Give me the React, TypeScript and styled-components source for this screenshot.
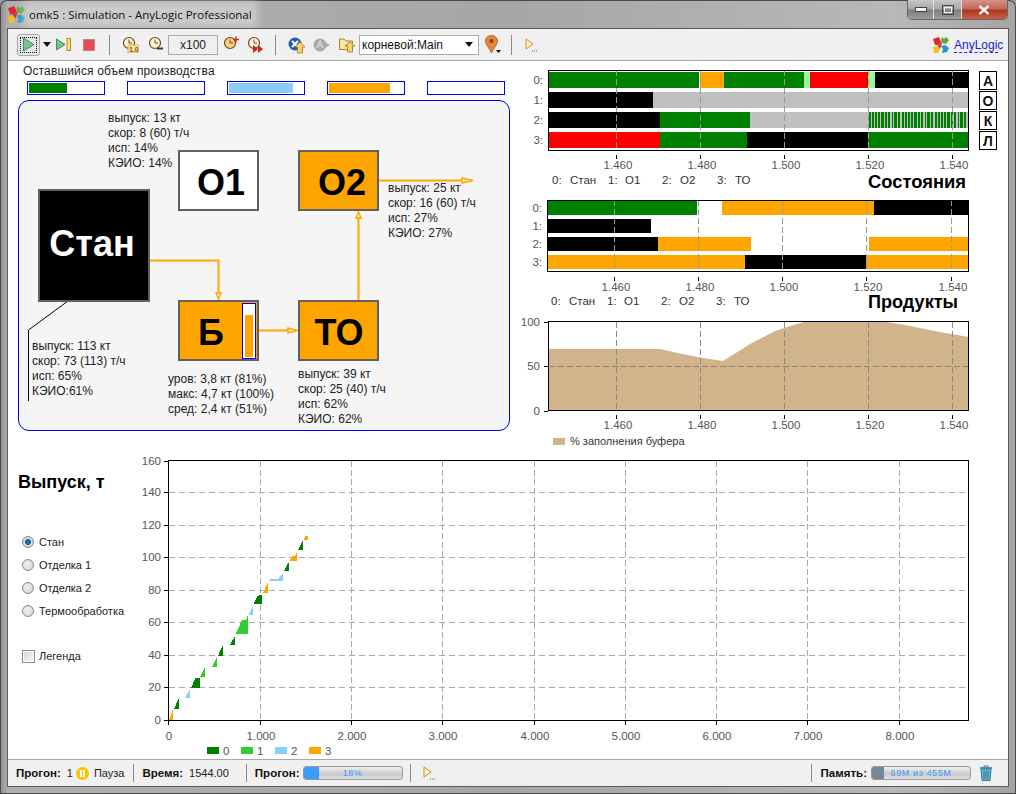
import React from "react";
import styled, { createGlobalStyle } from "styled-components";

const Global = createGlobalStyle`
  html, body { margin: 0; padding: 0; background: #9a9a9a; overflow: hidden; }
  * { box-sizing: border-box; }
`;

const FONT = `"Liberation Sans", Arial, sans-serif`;

const Win = styled.div`
  width: 1016px; height: 794px; display: flex; flex-direction: column;
  padding: 0 8px 8px; position: relative; overflow: hidden;
  font-family: ${FONT}; color: #111;
  background: linear-gradient(90deg, #8d8d8d 0, #b0b0b0 8px, #a6a6a6 50%, #b8b8b8 88%, #a4a4a4 100%);
  box-shadow: inset 0 0 0 1px #4a4a4a; border-radius: 7px 7px 0 0;
`;
const TitleBar = styled.div`height: 29px; display: flex; align-items: center; flex: none;`;
const TitleText = styled.div`
  margin-left: 4px; font-family: "Open Sans", sans-serif; font-size: 11.5px; line-height: 15px; color: #111;
  background: rgba(222,222,222,.6); box-shadow: 0 0 9px 6px rgba(222,222,222,.6);
`;
const WinButtons = styled.div`
  position: absolute; right: 8px; top: 0; width: 101px; height: 20px; display: flex;
  border: 1px solid #666; border-top: none; border-radius: 0 0 5px 5px; overflow: hidden;
`;
const WinBtn = styled.div<{ $w: number; $close?: boolean }>`
  width: ${p => p.$w}px; display: flex; align-items: center; justify-content: center;
  border-right: 1px solid #ddd;
  background: ${p => p.$close
    ? "linear-gradient(#d3938a 0, #c46a5a 45%, #b0341f 55%, #c9604c 100%)"
    : "linear-gradient(#c8c8c8 0, #a9a9a9 45%, #7e7e7e 55%, #9d9d9d 100%)"};
  &:last-child { border-right: none; }
`;

const Body = styled.div`flex: 1; display: flex; flex-direction: column; min-height: 0; background: #fff; box-shadow: 0 0 0 1px #5a5a5a;`;

const Toolbar = styled.div`
  height: 32px; flex: none; display: flex; align-items: center; padding: 0 10px 0 9px;
  background: #f0f0f0; border-bottom: 1px solid #a8a8a8;
`;
const Slot = styled.div<{ $ml: number }>`margin-left: ${p => p.$ml}px; display: flex; align-items: center; flex: none;`;
const RunBtn = styled.div`
  width: 23px; height: 22px; display: flex; align-items: center; justify-content: center; flex: none;
  border: 1px solid #aaa; border-radius: 3px; background: #e8e8e8; position: relative;
  &::after { content: ""; position: absolute; inset: 2px; border: 1px dotted #111; }
`;
const Sep = styled.div<{ $ml: number }>`margin-left: ${p => p.$ml}px; width: 1px; height: 20px; background: #8a8a8a; flex: none;`;
const Field = styled.div`
  margin-left: 3px; width: 50px; height: 20px; background: #efefef; border: 1px solid #aaa;
  display: flex; align-items: center; justify-content: center; font-size: 12px; color: #222; flex: none;
`;
const Combo = styled.div`
  margin-left: 3px; width: 120px; height: 20px; background: #fff; border: 1px solid #aaa; flex: none;
  display: flex; align-items: center; justify-content: space-between; padding: 0 5px 0 2px; font-size: 12px; color: #111;
`;
const Spacer = styled.div`flex: 1;`;
const LogoLink = styled.div`
  margin-left: 5px; color: #2222dd; font-size: 12px; width: 44px; line-height: 13px; border-bottom: 1px dashed #2222dd; margin-top: 2px; white-space: nowrap;
`;

const Content = styled.div`flex: 1; display: flex; flex-direction: column; min-height: 0; background: #fff;`;
const UpperRow = styled.div`display: flex; height: 384px; flex: none;`;
const LeftCol = styled.div`width: 512px; flex: none; padding: 4px 0 0 10px;`;
const RemainTitle = styled.div`font-size: 12px; line-height: 13px; margin-left: 5px; letter-spacing: .14px; color: #222;`;
const RemainRow = styled.div`display: flex; gap: 22px; margin: 3px 0 5px 9px;`;
const RemainBar = styled.div`width: 78px; height: 14px; border: 1px solid #0000ee; background: #fff; padding: 1px;`;
const RemainFill = styled.div<{ $c: string }>`height: 10px; background: ${p => p.$c};`;

const Diagram = styled.div`
  position: relative; width: 492px; height: 331px; border: 1px solid #0000ee; border-radius: 11px; background: #f5f5f5;
`;
const Wires = styled.svg`position: absolute; left: -1px; top: -1px; width: 492px; height: 331px; pointer-events: none;`;
const Node = styled.div<{ $x: number; $y: number; $w: number; $h: number; $bg: string; $fg: string; $shift: number; $drop: number }>`
  position: absolute; left: ${p => p.$x - 19}px; top: ${p => p.$y - 101}px; width: ${p => p.$w}px; height: ${p => p.$h}px;
  background: ${p => p.$bg}; color: ${p => p.$fg}; border: 2px solid #606060;
  display: flex; align-items: center; justify-content: center; font-weight: 700; font-size: 36px;
  padding-left: ${p => Math.max(p.$shift, 0)}px; padding-right: ${p => Math.max(-p.$shift, 0)}px;
  padding-top: ${p => Math.max(p.$drop, 0)}px; padding-bottom: ${p => Math.max(-p.$drop, 0)}px;
`;
const Gauge = styled.div`
  position: absolute; left: 223px; top: 202px; width: 14px; height: 56px; background: #fff; border: 1px solid #0000ee;
  display: flex; align-items: flex-end; padding: 1px 2px;
`;
const GaugeFill = styled.div`width: 8px; height: 42px; background: #ffa500;`;
const Info = styled.div<{ $x: number; $y: number }>`
  position: absolute; left: ${p => p.$x - 19}px; top: ${p => p.$y - 101}px; font-size: 12px; line-height: 15px; color: #222;
  white-space: nowrap;
`;

const RightCol = styled.div`width: 488px; flex: none; display: flex; flex-direction: column;`;
const ChartRow = styled.div`display: flex; flex: none;`;
const ChartSvg = styled.svg`display: block; flex: none;`;
const Letters = styled.div`display: flex; flex-direction: column; gap: 1px; margin: 10px 0 0 0; flex: none;`;
const Letter = styled.div`
  width: 18px; height: 19px; border: 1px solid #000; background: #fff; font-weight: 700; font-size: 14px;
  display: flex; align-items: center; justify-content: center;
`;

const LowerRow = styled.div`flex: 1; display: flex; min-height: 0;`;
const Side = styled.div`width: 128px; flex: none; padding: 26px 0 0 10px;`;
const BigTitle = styled.div`font-size: 18px; font-weight: 700; line-height: 22px; color: #000;`;
const Radios = styled.div`display: flex; flex-direction: column; gap: 7px; margin: 41px 0 0 4px;`;
const RadioRow = styled.div`display: flex; align-items: center; height: 16px; font-size: 11px; color: #1a1a2a; white-space: nowrap;`;
const RadioDot = styled.span<{ $on?: boolean }>`
  width: 12px; height: 12px; border-radius: 50%; margin-right: 5px; flex: none; border: 1px solid #8a8a8a;
  background: ${p => p.$on ? "radial-gradient(circle, #1f7fc0 0, #0d5a94 38%, #e4e4e4 45%, #c4c4c4 100%)" : "radial-gradient(circle at 40% 40%, #f2f2f2 0, #cfcfcf 100%)"};
`;
const CheckRow = styled(RadioRow)`margin: 29px 0 0 4px;`;
const CheckBox = styled.span`
  width: 13px; height: 13px; margin-right: 4px; flex: none; border: 1px solid #8a8a8a;
  background: linear-gradient(135deg, #d8d8d8, #f6f6f6); box-shadow: inset 0 0 0 1px #fff;
`;

const Status = styled.div`
  height: 27px; flex: none; display: flex; align-items: center; background: #f0f0f0; border-top: 1px solid #a8a8a8;
  padding: 0 8px; font-size: 11px; color: #222;
`;
const SLabel = styled.b<{ $ml: number }>`margin-left: ${p => p.$ml}px; font-size: 11.5px; color: #111; white-space: nowrap;`;
const SText = styled.span<{ $ml: number }>`margin-left: ${p => p.$ml}px; font-size: 11px; white-space: nowrap;`;
const SSep = styled.div<{ $ml: number }>`margin-left: ${p => p.$ml}px; width: 1px; height: 18px; background: #8a8a8a; flex: none;`;
const PauseDot = styled.span`
  margin-left: 3px; width: 13px; height: 13px; border-radius: 50%; background: #fdc400; flex: none; position: relative;
  &::before, &::after { content: ""; position: absolute; top: 3px; width: 2px; height: 7px; background: #fff; }
  &::before { left: 4px; } &::after { left: 7px; }
`;
const Meter = styled.div<{ $ml: number; $w: number }>`
  margin-left: ${p => p.$ml}px; width: ${p => p.$w}px; height: 14px; flex: none; position: relative; overflow: hidden;
  border: 1px solid #999; border-radius: 3px; background: linear-gradient(#efefef, #c9c9c9 60%, #e2e2e2);
  display: flex; align-items: center; justify-content: center; font-size: 9px; color: #3b9bff; letter-spacing: .6px;
`;
const MeterFill = styled.div<{ $c: string }>`position: absolute; left: 0; top: 0; bottom: 0; background: ${p => p.$c};`;

const AxisT = styled.text`font-family: ${FONT}; font-size: 11.5px; fill: #555;`;
const LegendT = styled.text`font-family: ${FONT}; font-size: 11.5px; fill: #333;`;
const ChartTitle = styled.text`font-family: ${FONT}; font-size: 18px; font-weight: 700; fill: #000;`;
const AreaLegend = styled.div`font-size: 11px; line-height: 13px; color: #333; margin: -10px 0 0 50px; height: 13px; position: relative;`;

const G = "#008000", O = "#ffa500", R = "#ff0000", K = "#000", S = "#c0c0c0", L = "#98fb98";
const LIME = "#32cd32", SKY = "#87cefa";
type B = [number, number, string];

const Stripes = () => {
  const out: React.ReactNode[] = [];
  let x = 869, i = 0;
  const seq = [2, 1, 2, 1, 2, 1, 2, 1, 3, 1, 2, 1, 2, 2, 1, 1, 3, 1, 2, 2];
  while (x < 968) {
    const w = seq[i % seq.length];
    out.push(<rect key={x} x={x} y={112} width={Math.min(w, 968 - x)} height={16} fill={i % 2 ? S : G} shapeRendering="crispEdges" />);
    x += w; i++;
  }
  return <>{out}</>;
};

const V = ({ x, y1, y2, c = "#8a8a8a" }: { x: number; y1: number; y2: number; c?: string }) => (
  <line x1={x + .5} x2={x + .5} y1={y1} y2={y2} stroke={c} strokeDasharray="6 3" shapeRendering="crispEdges" />
);
const XLabels = ({ xs, y }: { xs: number[]; y: number }) => (
  <>
    {["1.460", "1.480", "1.500", "1.520", "1.540"].map((t, i) => (
      <React.Fragment key={t}>
        <line x1={xs[i] + .5} x2={xs[i] + .5} y1={y - 14} y2={y - 10} stroke="#000" shapeRendering="crispEdges" />
        <AxisT x={xs[i] + 2} y={y} textAnchor="middle">{t}</AxisT>
      </React.Fragment>
    ))}
  </>
);
const StateLegend = ({ y, dx }: { y: number; dx: number }) => (
  <>
    {[["0:", 552], ["Стан", 570], ["1:", 608], ["О1", 625], ["2:", 662], ["О2", 680], ["3:", 717], ["ТО", 735]].map(([t, x]) => (
      <LegendT key={String(t)} x={(x as number) + dx} y={y}>{t}</LegendT>
    ))}
  </>
);

const Gantt = ({ top, height, rows, rowY, rowH, xs, frame, label, labelX, titleY, labelsY, legendY, labelRight, dx, stripes }: {
  top: number; height: number; rows: B[][]; rowY: number[]; rowH: number; xs: number[]; frame: [number, number, number, number];
  label: string; labelX: number; titleY: number; labelsY: number; legendY: number; labelRight: number; dx: number; stripes?: boolean;
}) => (
  <ChartSvg width={459} height={height} viewBox={`520 ${top} 459 ${height}`}>
    {rows.map((bars, i) => bars.map(([a, b, c]) => (
      <rect key={`${i}-${a}`} x={a} y={rowY[i]} width={b - a} height={rowH} fill={c} shapeRendering="crispEdges" />
    )))}
    {stripes && <Stripes />}
    {xs.map(x => <V key={x} x={x} y1={frame[1]} y2={frame[3]} c="#9a9a9a" />)}
    <rect x={frame[0] + .5} y={frame[1] + .5} width={frame[2] - frame[0]} height={frame[3] - frame[1]} fill="none" stroke="#000" shapeRendering="crispEdges" />
    {rowY.map((y, i) => <AxisT key={i} x={labelRight} y={y + rowH / 2 + 4} textAnchor="end">{i}:</AxisT>)}
    <XLabels xs={xs} y={labelsY} />
    <StateLegend y={legendY} dx={dx} />
    <ChartTitle x={868} y={titleY} textLength={labelX} lengthAdjust="spacingAndGlyphs">{label}</ChartTitle>
  </ChartSvg>
);

const AreaChart = () => {
  const xs = [616, 700, 784, 868, 952];
  return (
    <ChartSvg width={459} height={130} viewBox="520 315 459 130">
      <polygon fill="#d2b48c" points="549,411 549,349 660,349 680,353.5 703,358 723,361 750,344 775,331 790,326 804,322 887,322 905,325 920,328 945,333 969,337 969,411" />
      <line x1={549} x2={969} y1={366.5} y2={366.5} stroke="#8a8578" strokeDasharray="6 3" shapeRendering="crispEdges" />
      {xs.map(x => <V key={x} x={x} y1={322} y2={411} c="#8e8a80" />)}
      <rect x={548.5} y={321.5} width={420} height={89} fill="none" stroke="#000" shapeRendering="crispEdges" />
      {[["100", 326], ["50", 370], ["0", 415]].map(([t, y]) => <AxisT key={String(t)} x={540} y={y} textAnchor="end">{t}</AxisT>)}
      {[322, 366, 411].map(y => <line key={y} x1={544} x2={548} y1={y + .5} y2={y + .5} stroke="#000" shapeRendering="crispEdges" />)}
      <XLabels xs={xs} y={429} />
      <rect x={553} y={438} width={12} height={7} fill="#d2b48c" />
    </ChartSvg>
  );
};

const Steps = ({ pts, fill }: { pts: number[][]; fill: string }) => (
  <polygon fill={fill} shapeRendering="crispEdges" points={pts.map(([x, y]) => `${160 + x / 3},${530 + y / 3}`).join(" ")} />
);
const BigChart = () => {
  const xt = [168, 260, 351, 442, 534, 625, 716, 807, 899];
  const xl = ["0", "1.000", "2.000", "3.000", "4.000", "5.000", "6.000", "7.000", "8.000"];
  const yt: [number, string][] = [[461, "160"], [492, "140"], [525, "120"], [557, "100"], [590, "80"], [622, "60"], [655, "40"], [687, "20"], [720, "0"]];
  return (
    <ChartSvg width={872} height={313} viewBox="136 445 872 313">
      {yt.slice(1, 8).map(([y]) => <line key={y} x1={169} x2={969} y1={y + .5} y2={y + .5} stroke="#aaa" strokeDasharray="6 4" shapeRendering="crispEdges" />)}
      {xt.slice(1).map(x => <V key={x} x={x} y1={461} y2={720} c="#aaa" />)}
      <Steps fill={O} pts={[[27, 570], [38, 570], [38, 540]]} />
      <Steps fill={G} pts={[[42, 537], [56, 537], [56, 505]]} />
      <Steps fill={SKY} pts={[[75, 503], [90, 503], [90, 478]]} />
      <Steps fill={G} pts={[[94, 473], [120, 473], [120, 444], [106, 444]]} />
      <Steps fill={LIME} pts={[[120, 440], [135, 440], [135, 412]]} />
      <Steps fill={LIME} pts={[[156, 410], [171, 410], [171, 380]]} />
      <Steps fill={G} pts={[[174, 377], [189, 377], [189, 345]]} />
      <Steps fill={G} pts={[[210, 344], [225, 344], [225, 318]]} />
      <Steps fill={LIME} pts={[[228, 311], [264, 311], [264, 256], [258, 270], [246, 270]]} />
      <Steps fill={SKY} pts={[[266, 254], [279, 254], [279, 228]]} />
      <Steps fill={G} pts={[[282, 221], [306, 221], [306, 193], [292, 198]]} />
      <Steps fill={O} pts={[[309, 188], [324, 188], [324, 157]]} />
      <Steps fill={SKY} pts={[[327, 152], [369, 152], [369, 129], [355, 147], [332, 147]]} />
      <Steps fill={G} pts={[[372, 122], [387, 122], [387, 95]]} />
      <Steps fill={O} pts={[[390, 92], [411, 92], [411, 67], [405, 78], [396, 78]]} />
      <Steps fill={G} pts={[[414, 59], [429, 59], [429, 30]]} />
      <Steps fill={O} pts={[[430, 30], [444, 30], [444, 18], [436, 18]]} />
      <rect x={168.5} y={460.5} width={800} height={260} fill="none" stroke="#000" shapeRendering="crispEdges" />
      {yt.map(([y, t]) => (
        <React.Fragment key={t}>
          <line x1={164} x2={168} y1={y + .5} y2={y + .5} stroke="#000" shapeRendering="crispEdges" />
          <AxisT x={161} y={y + 4} textAnchor="end">{t}</AxisT>
        </React.Fragment>
      ))}
      {xt.map((x, i) => (
        <React.Fragment key={x}>
          <line x1={x + .5} x2={x + .5} y1={721} y2={725} stroke="#000" shapeRendering="crispEdges" />
          <AxisT x={x + 1} y={740} textAnchor="middle">{xl[i]}</AxisT>
        </React.Fragment>
      ))}
      {[[207, G, "0"], [241, LIME, "1"], [275, SKY, "2"], [309, O, "3"]].map(([x, c, t]) => (
        <React.Fragment key={String(t)}>
          <rect x={x as number} y={747} width={12} height={7} fill={c as string} />
          <AxisT x={(x as number) + 16} y={755}>{t}</AxisT>
        </React.Fragment>
      ))}
    </ChartSvg>
  );
};

const Logo = ({ s = 16 }: { s?: number }) => (
  <svg width={s} height={s} viewBox="0 0 16 16">
    <path d="M0 2 L6 0 L8 5 L5 8 L2 8 Z" fill="#e0262c" />
    <path d="M9 0 L11 2 L13 0 L16 3 L13 7 L9 6 L8 3 Z" fill="#5aa83a" />
    <path d="M0 10 L5 9 L7 12 L5 16 L1 16 Z" fill="#f3c01f" />
    <path d="M8 9 L12 8 L16 11 L14 15 L9 16 L10 12 Z" fill="#2a93d5" />
    <path d="M5 8 L8 5 L9 6 L8 9 L7 12 L5 9 Z" fill="#c7392f" />
  </svg>
);
const Play = () => (
  <svg width="13" height="15" viewBox="0 0 13 15"><path d="M1.5 1 L12 7.5 L1.5 14 Z" fill="#7cc48a" stroke="#3c8c6a" /></svg>
);
const StepIcon = () => (
  <svg width="15" height="13" viewBox="0 0 15 13">
    <path d="M.5 1 L9 6.5 L.5 12 Z" fill="#7cc48a" stroke="#3c8c6a" />
    <rect x="11" y=".5" width="3.5" height="12" fill="#fbe08a" stroke="#b08a20" />
  </svg>
);
const Caret = () => <svg width="8" height="5" viewBox="0 0 8 5"><path d="M0 0 H8 L4 5 Z" fill="#111" /></svg>;
const Clock = ({ kind }: { kind: "one" | "minus" | "plus" | "fast" }) => (
  <svg width="17" height="17" viewBox="0 0 17 17">
    <circle cx="7" cy="7" r="5.5" fill={kind === "plus" ? "#f7d08a" : "#fdf3da"} stroke="#6b4a16" strokeWidth="1.2" />
    <path d="M7 3.5 V7 H10" fill="none" stroke="#6b4a16" />
    {kind === "one" && <><rect x="6" y="9" width="11" height="8" fill="#fbe3a2" stroke="#c78f2a" strokeWidth=".6" /><text x="7" y="15.6" fontSize="7" fontFamily={FONT} fontWeight="700" fill="#8a5a10">1.0</text></>}
    {kind === "minus" && <path d="M9 12.5 H15" stroke="#6b2a10" strokeWidth="2" />}
    {kind === "plus" && <path d="M13 0.5 V6.5 M10 3.5 H16" stroke="#e02020" strokeWidth="1.4" />}
    {kind === "fast" && <path d="M6 9 L11 13 L6 17 Z M11 9 L16 13 L11 17 Z" fill="#c8201e" />}
  </svg>
);
const Pin = () => (
  <svg width="16" height="20" viewBox="0 0 16 20">
    <path d="M6.5 0.5 C10 0.5 12.5 3 12.5 6 C12.5 9.5 8.5 13 6.5 18 C4.5 13 0.5 9.5 0.5 6 C0.5 3 3 0.5 6.5 0.5 Z" fill="#e8863a" stroke="#b8652a" />
    <circle cx="6.5" cy="6" r="2" fill="#8a3d12" />
    <path d="M11 15 H16 L13.5 18 Z" fill="#111" />
  </svg>
);
const PlayDots = () => (
  <svg width="12" height="14" viewBox="0 0 12 14">
    <path d="M1 1 L8 6 L1 11 Z" fill="#fbf0cc" stroke="#c8951f" />
    <path d="M7 13 h1 M9 13 h1 M11 13 h1" stroke="#8a6a1a" />
  </svg>
);
const UpX = () => (
  <svg width="17" height="18" viewBox="0 0 17 18">
    <circle cx="7" cy="8" r="6.5" fill="#1f5fae" />
    <path d="M4 5 L10 11 M10 5 L4 11" stroke="#fff" strokeWidth="2" />
    <path d="M12 6 L17 11 H14.5 V17 H9.5 V11 H7 Z" fill="#fbd36b" stroke="#9a6a1a" strokeWidth=".7" />
  </svg>
);
const GrayA = () => (
  <svg width="17" height="14" viewBox="0 0 17 14">
    <circle cx="7" cy="7" r="6.5" fill="#a9a9a9" />
    <path d="M4 10 L7 3 L10 10 M5 8 H9" stroke="#ddd" strokeWidth="1.2" fill="none" />
    <path d="M12 4 L17 7 L12 10 Z" fill="#a9a9a9" />
  </svg>
);
const Folder = () => (
  <svg width="17" height="17" viewBox="0 0 17 17">
    <path d="M0.5 3 H5 L7 5 H13.5 V13.5 H0.5 Z" fill="#fbe3a6" stroke="#a9813a" />
    <path d="M11 6 L16 10 H13.5 V16 H8.5 V10 H6 Z" fill="#fbd36b" stroke="#8a6a1a" strokeWidth=".7" />
  </svg>
);
const Trash = () => (
  <svg width="14" height="16" viewBox="0 0 14 16">
    <path d="M1 3 H13" stroke="#2f7d9c" strokeWidth="1.6" />
    <path d="M5 2.5 V1 H9 V2.5" fill="none" stroke="#2f7d9c" />
    <path d="M2 4 H12 L11 15.5 H3 Z" fill="#6bb4cf" stroke="#2f7d9c" />
    <path d="M5 6 V14 M7 6 V14 M9 6 V14" stroke="#2f7d9c" />
  </svg>
);

const stateRows: B[][] = [
  [[549, 699, G], [700, 724, O], [724, 804, G], [804, 810, L], [810, 868, R], [868, 875, L], [875, 969, K]],
  [[549, 653, K], [653, 969, S]],
  [[549, 660, K], [660, 750, G], [750, 869, S]],
  [[549, 660, R], [660, 747, G], [747, 868, K], [868, 969, G]],
];
const prodRows: B[][] = [
  [[548, 697, G], [722, 874, O], [874, 969, K]],
  [[548, 651, K]],
  [[548, 658, K], [658, 751, O], [869, 969, O]],
  [[548, 745, O], [745, 866, K], [866, 969, O]],
];

const Lines = ({ x, y, t }: { x: number; y: number; t: string[] }) => (
  <Info $x={x} $y={y}>{t.map(l => <div key={l}>{l}</div>)}</Info>
);

export default function App() {
  return (
    <Win>
      <Global />
      <TitleBar>
        <Logo s={17} />
        <TitleText>omk5 : Simulation - AnyLogic Professional</TitleText>
      </TitleBar>
      <WinButtons>
        <WinBtn $w={27}><svg width="12" height="5"><rect x=".5" y=".5" width="11" height="4" fill="#f4f4f4" stroke="#444" /></svg></WinBtn>
        <WinBtn $w={28}><svg width="12" height="10"><rect x=".5" y=".5" width="11" height="9" fill="none" stroke="#444" /><rect x="2.5" y="2.5" width="7" height="5" fill="none" stroke="#eee" /></svg></WinBtn>
        <WinBtn $w={46} $close><svg width="12" height="10" viewBox="0 0 12 10"><path d="M1.5 1 L10.5 9 M10.5 1 L1.5 9" stroke="#f2f2f2" strokeWidth="2.4" /></svg></WinBtn>
      </WinButtons>
      <Body>
        <Toolbar>
          <RunBtn><Play /></RunBtn>
          <Slot $ml={3}><Caret /></Slot>
          <Slot $ml={5}><StepIcon /></Slot>
          <Slot $ml={12}><svg width="12" height="12"><rect x=".5" y=".5" width="11" height="11" fill="#ea4a55" stroke="#b8868a" /></svg></Slot>
          <Sep $ml={14} />
          <Slot $ml={12}><Clock kind="one" /></Slot>
          <Slot $ml={9}><Clock kind="minus" /></Slot>
          <Field>x100</Field>
          <Slot $ml={5}><Clock kind="plus" /></Slot>
          <Slot $ml={7}><Clock kind="fast" /></Slot>
          <Sep $ml={11} />
          <Slot $ml={12}><UpX /></Slot>
          <Slot $ml={8}><GrayA /></Slot>
          <Slot $ml={9}><Folder /></Slot>
          <Combo>корневой:Main<Caret /></Combo>
          <Slot $ml={6}><Pin /></Slot>
          <Sep $ml={10} />
          <Slot $ml={13}><PlayDots /></Slot>
          <Spacer />
          <Logo />
          <LogoLink>AnyLogic</LogoLink>
        </Toolbar>
        <Content>
          <UpperRow>
            <LeftCol>
              <RemainTitle>Оставшийся объем производства</RemainTitle>
              <RemainRow>
                <RemainBar><RemainFill $c={G} style={{ width: "52%" }} /></RemainBar>
                <RemainBar />
                <RemainBar><RemainFill $c={SKY} style={{ width: "86%" }} /></RemainBar>
                <RemainBar><RemainFill $c={O} style={{ width: "82%" }} /></RemainBar>
                <RemainBar />
              </RemainRow>
              <Diagram>
                <Wires viewBox="18 100 492 331">
                  <g fill="none" stroke="#ffa500" strokeWidth="2">
                    <path d="M149 260.5 H218.5 V298" />
                    <path d="M259 330.5 H296" />
                    <path d="M358.5 300 V213" />
                    <path d="M379 180.5 H472" />
                  </g>
                  <g fill="#ffe9b8" stroke="#ffa500" strokeWidth="1.4">
                    <path d="M216 293 L218.5 299 L221 293 Z" />
                    <path d="M288 328 L297 330.5 L288 333 Z" />
                    <path d="M356 218 L358.5 212 L361 218 Z" />
                    <path d="M462 178 L473 180.5 L462 183 Z" />
                  </g>
                  <path d="M68 301 L28.5 330 V401" fill="none" stroke="#000" />
                </Wires>
                <Node $x={38} $y={189} $w={112} $h={113} $bg="#000" $fg="#fff" $shift={-4} $drop={-3}>Стан</Node>
                <Node $x={178} $y={150} $w={81} $h={61} $bg="#fff" $fg="#000" $shift={5} $drop={5}>О1</Node>
                <Node $x={298} $y={150} $w={81} $h={61} $bg="#ffa500" $fg="#000" $shift={7} $drop={5}>О2</Node>
                <Node $x={178} $y={300} $w={81} $h={61} $bg="#ffa500" $fg="#000" $shift={-15} $drop={5}>Б</Node>
                <Node $x={298} $y={300} $w={81} $h={61} $bg="#ffa500" $fg="#000" $shift={1} $drop={5}>ТО</Node>
                <Gauge><GaugeFill /></Gauge>
                <Lines x={108} y={111} t={["выпуск: 13 кт", "скор: 8 (60) т/ч", "исп: 14%", "КЭИО: 14%"]} />
                <Lines x={388} y={181} t={["выпуск: 25 кт", "скор: 16 (60) т/ч", "исп: 27%", "КЭИО: 27%"]} />
                <Lines x={32} y={339} t={["выпуск: 113 кт", "скор: 73 (113) т/ч", "исп: 65%", "КЭИО:61%"]} />
                <Lines x={168} y={372} t={["уров: 3,8 кт (81%)", "макс: 4,7 кт (100%)", "сред: 2,4 кт (51%)"]} />
                <Lines x={298} y={367} t={["выпуск: 39 кт", "скор: 25 (40) т/ч", "исп: 62%", "КЭИО: 62%"]} />
              </Diagram>
            </LeftCol>
            <RightCol>
              <ChartRow>
                <Gantt top={61} height={129} rows={stateRows} rowY={[72, 92, 112, 132]} rowH={16} xs={[616, 700, 784, 868, 952]}
                  frame={[548, 70, 968, 150]} label="Состояния" labelX={98} titleY={188} labelsY={169} legendY={184} labelRight={543} dx={0} stripes />
                <Letters>
                  {["А", "О", "К", "Л"].map(l => <Letter key={l}>{l}</Letter>)}
                </Letters>
              </ChartRow>
              <ChartRow>
                <Gantt top={190} height={125} rows={prodRows} rowY={[201, 219, 237, 255]} rowH={14} xs={[614, 698, 782, 866, 951]}
                  frame={[547, 200, 968, 271]} label="Продукты" labelX={90} titleY={308} labelsY={291} legendY={305} labelRight={542} dx={-1} />
              </ChartRow>
              <ChartRow><AreaChart /></ChartRow>
              <AreaLegend>% заполнения буфера</AreaLegend>
            </RightCol>
          </UpperRow>
          <LowerRow>
            <Side>
              <BigTitle>Выпуск, т</BigTitle>
              <Radios>
                <RadioRow><RadioDot $on />Стан</RadioRow>
                <RadioRow><RadioDot />Отделка 1</RadioRow>
                <RadioRow><RadioDot />Отделка 2</RadioRow>
                <RadioRow><RadioDot />Термообработка</RadioRow>
              </Radios>
              <CheckRow><CheckBox />Легенда</CheckRow>
            </Side>
            <BigChart />
          </LowerRow>
        </Content>
        <Status>
          <SLabel $ml={0}>Прогон:</SLabel>
          <SText $ml={6}>1</SText>
          <PauseDot />
          <SText $ml={5}>Пауза</SText>
          <SSep $ml={9} />
          <SLabel $ml={8}>Время:</SLabel>
          <SText $ml={6}>1544.00</SText>
          <SSep $ml={17} />
          <SLabel $ml={8}>Прогон:</SLabel>
          <Meter $ml={3} $w={100}><MeterFill $c="#3b9bff" style={{ width: 15 }} />18%</Meter>
          <SSep $ml={7} />
          <Slot $ml={12}><PlayDots /></Slot>
          <Spacer />
          <SSep $ml={0} />
          <SLabel $ml={9}>Память:</SLabel>
          <Meter $ml={4} $w={100}><MeterFill $c="#778899" style={{ width: 12 }} />69M из 455M</Meter>
          <Slot $ml={8}><Trash /></Slot>
          <Slot $ml={7}><span /></Slot>
        </Status>
      </Body>
    </Win>
  );
}
